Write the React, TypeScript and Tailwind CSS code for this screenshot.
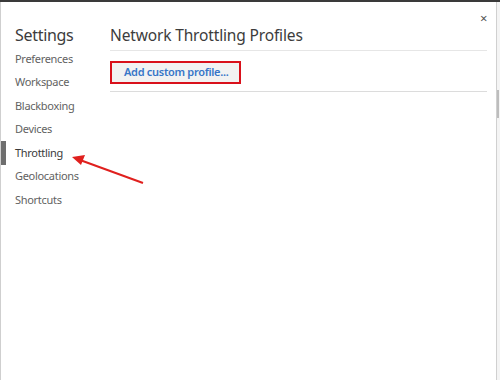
export default function App() {
  const items = ['Preferences', 'Workspace', 'Blackboxing', 'Devices', 'Throttling', 'Geolocations', 'Shortcuts']
  const selected = 'Throttling'

  return (
    <div className="relative h-[380px] w-[500px] overflow-hidden bg-white font-['Noto_Sans',sans-serif]">
      <div className="h-[2px] bg-[#3a3a3a]" />
      <div className="flex h-[378px] border-l border-[#cfcfcf]">
        <div className="flex flex-1">
          {/* sidebar */}
          <div className="w-[109px] shrink-0 pt-[21px]">
            <div className="pl-[14px] text-[16px] leading-[24px] tracking-[-0.3px] text-[#3c3c3c]">Settings</div>
            <ul>
              {items.map((it) => (
                <li
                  key={it}
                  className={
                    it === selected
                      ? 'flex h-[23.5px] items-center border-l-[5px] border-[#6e6e6e] pl-[9px] text-[11px] tracking-[-0.3px] text-[#3a3a3a]'
                      : 'flex h-[23.5px] items-center pl-[14px] text-[11px] tracking-[-0.3px] text-[#626262]'
                  }
                >
                  {it}
                </li>
              ))}
            </ul>
          </div>

          {/* main */}
          <div className="flex-1 pr-[9px] pt-[21px]">
            <h1 className="text-[15.5px] leading-[24px] tracking-[-0.15px] text-[#3c3c3c]">Network Throttling Profiles</h1>
            <div className="mt-[3px] h-px bg-[#e6e6e6]" />
            <div className="mt-[10px] flex">
              <button
                type="button"
                className="h-[23px] w-[131px] border-2 border-[#d9111b] bg-[#f2f2f2] pl-[12px] text-left text-[11px] font-semibold tracking-[-0.3px] text-[#3776c8]"
              >
                Add custom profile...
              </button>
            </div>
            <div className="mt-[7px] h-px bg-[#dcdcdc]" />
          </div>
        </div>
        <div className="relative w-[4px] border-l border-[#d0d0d0] bg-[#f4f4f4]">
          <div className="absolute left-0 top-[88px] h-[28px] w-[2px] bg-[#bdbdbd]" />
        </div>
      </div>

      {/* close */}
      <div className="absolute left-[480px] top-[12px] text-[13px] leading-none text-[#555]">×</div>

      {/* annotation arrow */}
      <svg className="absolute left-0 top-0" width="500" height="380" viewBox="0 0 500 380">
        <line x1="143" y1="183" x2="80" y2="160" stroke="#e0201e" strokeWidth="2" />
        <polygon points="72,157 85,155 81,165" fill="#e0201e" />
      </svg>
    </div>
  )
}
